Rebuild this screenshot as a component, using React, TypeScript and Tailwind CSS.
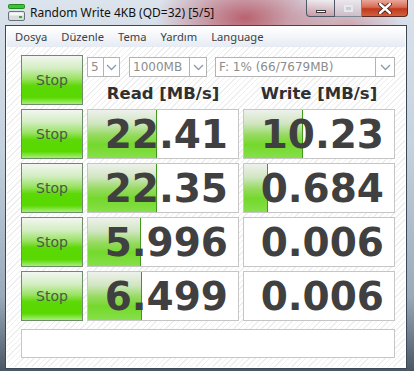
import React from 'react';

const rows = [
  { read: '22.41', readBar: 69, write: '10.23', writeBar: 59 },
  { read: '22.35', readBar: 69, write: '0.684', writeBar: 24 },
  { read: '5.996', readBar: 53, write: '0.006', writeBar: 0 },
  { read: '6.499', readBar: 54, write: '0.006', writeBar: 0 },
];

const StopButton = () => (
  <div className="flex h-full items-center justify-center border border-[#6f8c6a] bg-[image:linear-gradient(to_bottom,#f2f6f0_0%,#d4eec4_25%,#98e260_48%,#5cd806_62%,#58d800_86%,#a6ee78_100%)] font-['DejaVu_Sans',sans-serif] text-[14px] text-[#4a5a44]">
    Stop
  </div>
);

const ScoreCell = ({ value, bar }: { value: string; bar: number }) => (
  <div className="relative h-full overflow-hidden border border-[#c6c6c6] bg-white">
    {bar > 0 && (
      <div
        className="absolute bottom-0 left-0 top-0 border-r border-[#3f9a1c] bg-[image:linear-gradient(to_bottom,#eef1ec_0%,#d0e6c0_28%,#96da60_52%,#74d82c_72%,#86e04a_100%)]"
        style={{ width: bar }}
      />
    )}
    <div className="relative flex h-full items-center justify-end pr-[10px] font-['DejaVu_Sans',sans-serif] text-[39px] font-bold leading-none text-[#404040]">
      {value}
    </div>
  </div>
);

const Chevron = () => (
  <svg width="11" height="7" viewBox="0 0 11 7">
    <polyline points="1,1 5.5,5.5 10,1" fill="none" stroke="#8a9ab0" strokeWidth="1.3" />
  </svg>
);

const Combo = ({ text, editW, arrowW }: { text: string; editW: string; arrowW: string }) => (
  <div className="flex h-[20px]">
    <div className={`${editW} flex items-center border border-[#b4b4b4] bg-white pl-[3px] font-['DejaVu_Sans',sans-serif] text-[12px] text-[#8c8c8c]`}>
      {text}
    </div>
    <div className={`${arrowW} flex items-center justify-center border border-l-0 border-[#b4b4b4] bg-white`}>
      <Chevron />
    </div>
  </div>
);

const AppIcon = () => (
  <svg width="17" height="17" viewBox="0 0 17 17">
    <rect x="0.5" y="0.5" width="16" height="4" rx="1" fill="#3fc23a" stroke="#1f8a20" />
    <rect x="0.5" y="7.5" width="16" height="9" rx="1.5" fill="#d8dcdf" stroke="#6c7378" />
    <rect x="1.5" y="8.5" width="14" height="3" fill="#f4f6f7" />
    <rect x="11" y="12" width="3" height="2" fill="#2bb82a" />
  </svg>
);

const CaptionButtons = () => (
  <div className="mr-[6px] flex h-[17px] self-start">
    <div className="flex w-[29px] items-end justify-center rounded-bl-[4px] border border-t-0 border-[#4e5866] bg-[image:linear-gradient(to_bottom,rgba(255,255,255,0.55),rgba(190,120,135,0.35))] pb-[3px]">
      <div className="h-[3px] w-[10px] border border-[#3a3a3a] bg-white" />
    </div>
    <div className="flex w-[27px] items-center justify-center border border-l-0 border-t-0 border-[#7c8794] bg-[image:linear-gradient(to_bottom,rgba(255,255,255,0.45),rgba(200,200,210,0.3))]">
      <div className="h-[7px] w-[9px] border-2 border-[#e6e9ee] bg-[#c8ccd4]" />
    </div>
    <div className="flex w-[46px] items-center justify-center rounded-br-[4px] border border-l-0 border-t-0 border-[#5a2a24] bg-[image:linear-gradient(to_bottom,#e8a89a_0%,#d86a54_45%,#c0381e_55%,#d2603c_100%)]">
      <svg width="14" height="11" viewBox="0 0 14 11">
        <path d="M2 1 L12 10 M12 1 L2 10" stroke="#3a2020" strokeWidth="4.2" strokeLinecap="round" />
        <path d="M2 1 L12 10 M12 1 L2 10" stroke="#ffffff" strokeWidth="2.4" strokeLinecap="round" />
      </svg>
    </div>
  </div>
);

export default function App() {
  return (
    <div className="flex h-[371px] w-[414px] flex-col overflow-hidden bg-[image:radial-gradient(ellipse_90px_45px_at_245px_18px,rgba(175,55,70,0.75),rgba(175,55,70,0)),radial-gradient(ellipse_60px_40px_at_345px_30px,rgba(190,80,90,0.45),rgba(190,80,90,0)),linear-gradient(to_bottom,#dbe3ec_0%,#c4d1de_40%,#9aaabb_80%,#4a5664_100%)]">
      <div className="flex h-[25px] shrink-0 items-center">
        <div className="flex items-center gap-[5px] pl-[8px]">
          <AppIcon />
          <span className="font-['Noto_Sans',sans-serif] text-[12px] text-[#111]">Random Write 4KB (QD=32) [5/5]</span>
        </div>
        <div className="ml-auto flex self-stretch">
          <CaptionButtons />
        </div>
      </div>

      <div className="mb-[2px] ml-[5px] mr-[7px] flex flex-1 flex-col border border-[#3c4856]">
        <div className="flex flex-1 flex-col border border-white bg-white">
          <div className="flex h-[20px] shrink-0 items-center gap-[14px] bg-[image:linear-gradient(to_bottom,#ffffff,#e6ebf3)] pl-[8px] font-['Noto_Sans',sans-serif] text-[11.2px] text-[#3b3f46]">
            <span>Dosya</span>
            <span>Düzenle</span>
            <span>Tema</span>
            <span>Yardım</span>
            <span>Language</span>
          </div>

          <div className="flex flex-1 flex-col bg-[image:repeating-linear-gradient(135deg,#ffffff_0px,#ffffff_3px,#eeeeee_3px,#eeeeee_4px)] pl-[14px] pr-[10px] pt-[8px]">
            <div className="grid grid-cols-[62px_152px_152px] grid-rows-[50px_50px_50px_50px_50px] gap-x-[4px] gap-y-[4px]">
              <StopButton />
              <div className="col-span-2 flex flex-col">
                <div className="mt-[2px] flex">
                  <Combo text="5" editW="w-[17px]" arrowW="w-[16px]" />
                  <div className="ml-[9px]">
                    <Combo text="1000MB" editW="w-[61px]" arrowW="w-[17px]" />
                  </div>
                  <div className="ml-[8px]">
                    <Combo text="F: 1% (66/7679MB)" editW="w-[161px]" arrowW="w-[19px]" />
                  </div>
                </div>
                <div className="mt-[7px] grid grid-cols-[152px_152px] gap-x-[4px] font-['DejaVu_Sans',sans-serif] text-[16.5px] font-bold leading-[20px] text-[#303030]">
                  <div className="text-center">Read [MB/s]</div>
                  <div className="text-center">Write [MB/s]</div>
                </div>
              </div>
              {rows.map((r, i) => (
                <React.Fragment key={i}>
                  <StopButton />
                  <ScoreCell value={r.read} bar={r.readBar} />
                  <ScoreCell value={r.write} bar={r.writeBar} />
                </React.Fragment>
              ))}
            </div>
            <div className="mt-[8px] h-[29px] w-[374px] border border-[#c6c6c6] bg-white" />
          </div>
        </div>
      </div>
    </div>
  );
}
